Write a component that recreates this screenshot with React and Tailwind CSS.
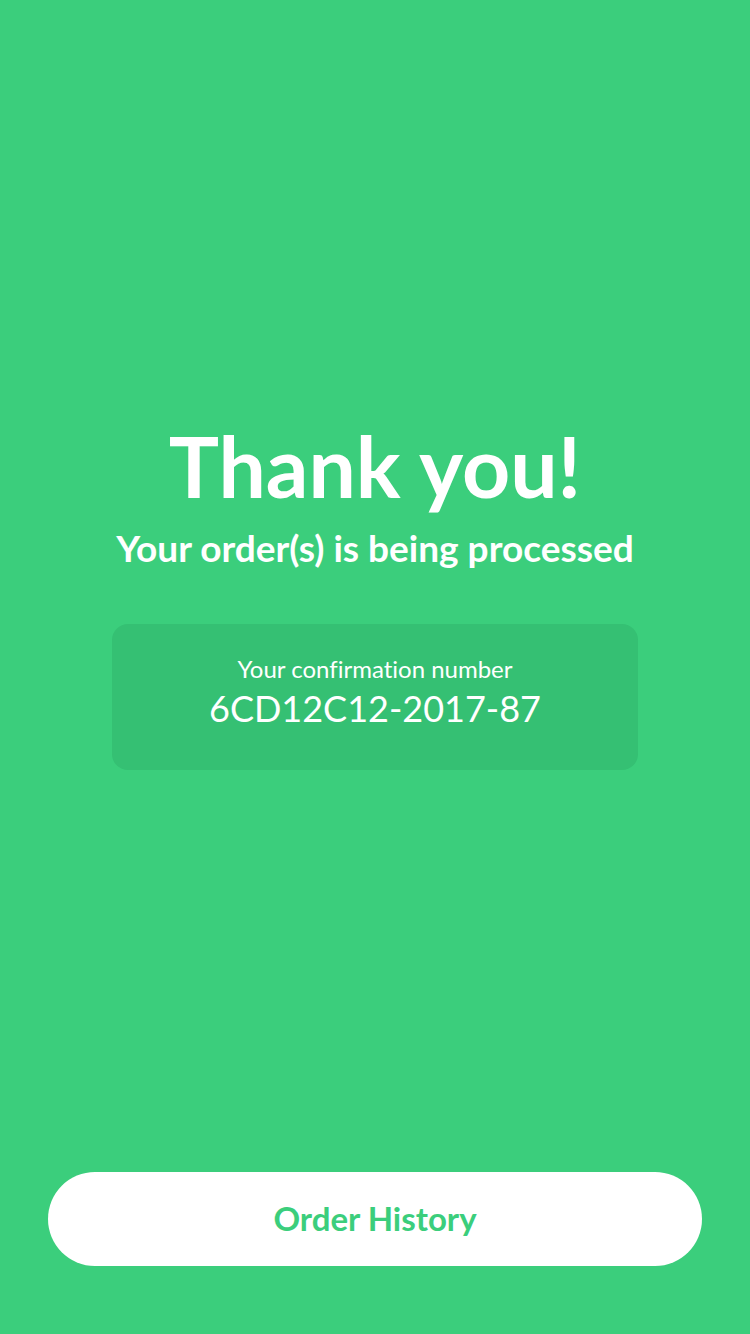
export default function App() {
  return (
    <div
      className="w-[750px] h-[1334px] bg-[#3bce7c] flex flex-col items-center text-white [font-variant-ligatures:none]"
      style={{ fontFamily: "Lato, 'Noto Sans', sans-serif" }}
    >
      <div className="flex flex-col items-center pt-[424px]">
        <h1 className="text-[84px] leading-[84px] font-bold">Thank you!</h1>
        <p className="mt-[21px] text-[37px] leading-[37px] font-bold">Your order(s) is being processed</p>
        <div className="mt-[58px] w-[526px] h-[146px] rounded-[16px] bg-[#35c073] flex flex-col items-center pt-[30px]">
          <p className="text-[24px] leading-[30px]">Your confirmation number</p>
          <p className="mt-[4px] text-[36px] leading-[40px]">6CD12C12-2017-87</p>
        </div>
      </div>
      <div className="flex-1" />
      <button className="mb-[68px] w-[654px] h-[94px] rounded-full bg-white text-[#3bce7c] text-[33px] font-bold">
        Order History
      </button>
    </div>
  );
}
